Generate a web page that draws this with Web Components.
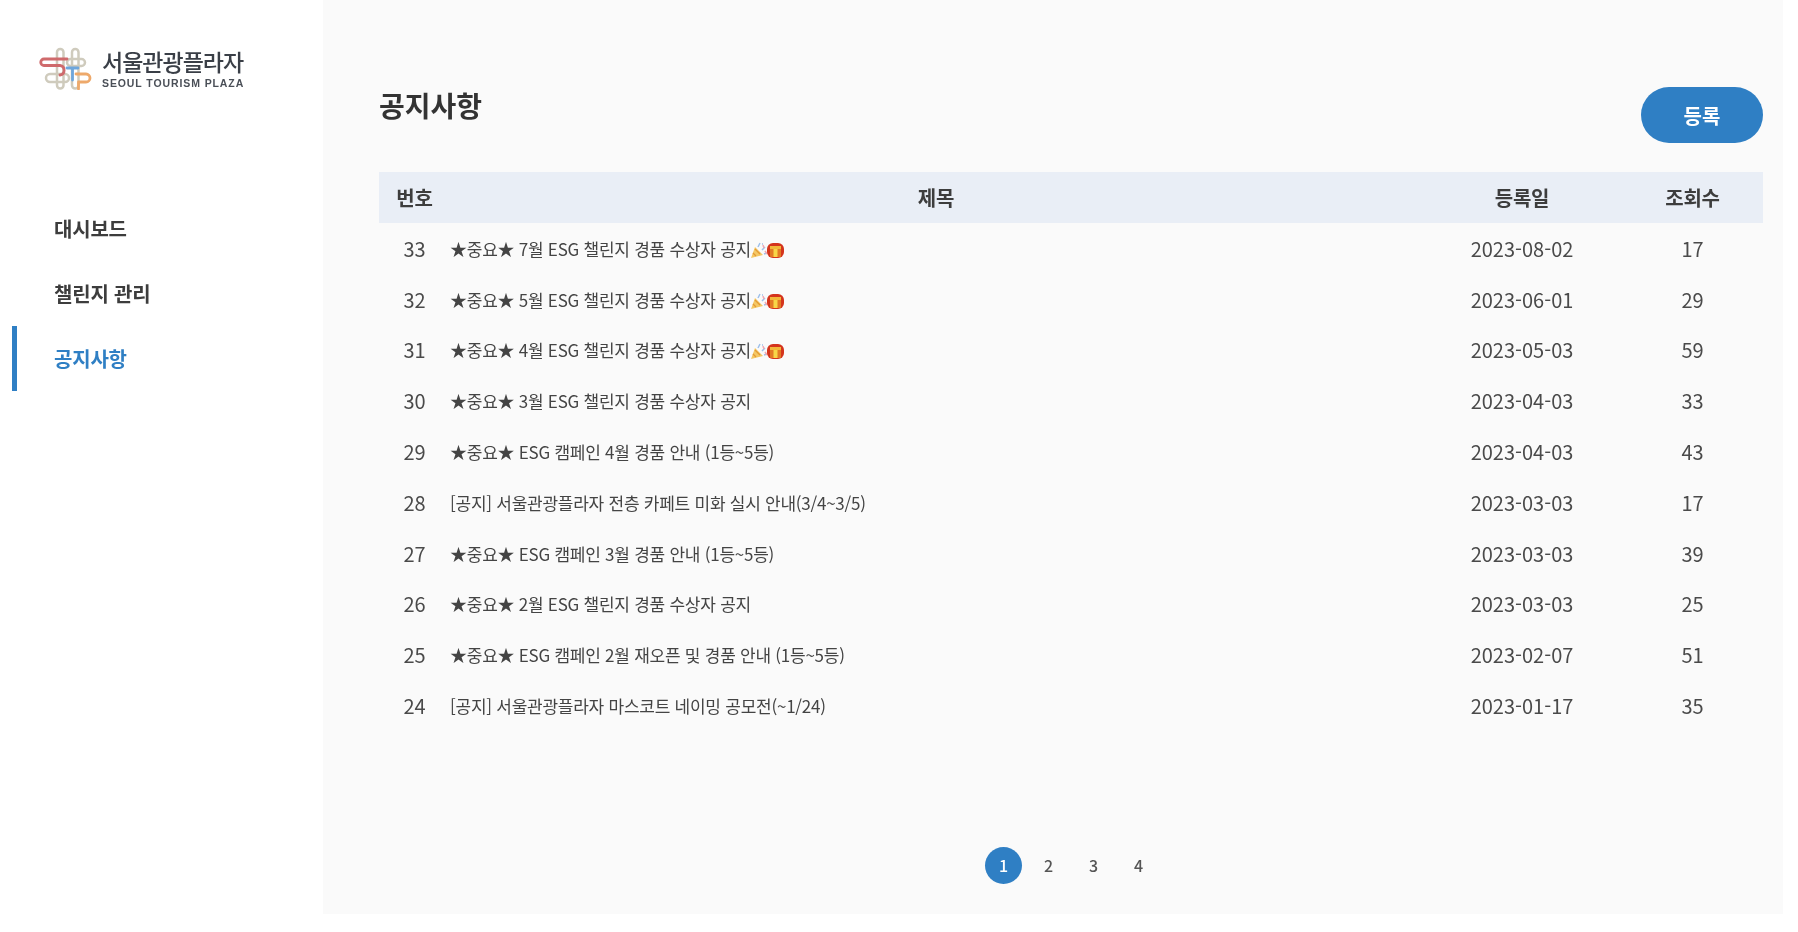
<!DOCTYPE html>
<html lang="ko">
<head>
<meta charset="utf-8">
<title>공지사항</title>
<style>
    html, body {
        margin: 0;
        background: #fff;
    }
    body {
        font-family: "Noto Sans CJK KR", "Noto Sans", sans-serif;
        color: #333;
    }
</style>
</head>
<body>
<admin-shell>
    <side-nav slot="side">
        <nav-item>대시보드</nav-item>
        <nav-item>챌린지 관리</nav-item>
        <nav-item active>공지사항</nav-item>
    </side-nav>
    <notice-board></notice-board>
</admin-shell>

<script>
const NOTICES = [
    [33, "★중요★ 7월 ESG 챌린지 경품 수상자 공지", "2023-08-02", 17, true],
    [32, "★중요★ 5월 ESG 챌린지 경품 수상자 공지", "2023-06-01", 29, true],
    [31, "★중요★ 4월 ESG 챌린지 경품 수상자 공지", "2023-05-03", 59, true],
    [30, "★중요★ 3월 ESG 챌린지 경품 수상자 공지", "2023-04-03", 33],
    [29, "★중요★ ESG 캠페인 4월 경품 안내 (1등~5등)", "2023-04-03", 43],
    [28, "[공지] 서울관광플라자 전층 카페트 미화 실시 안내(3/4~3/5)", "2023-03-03", 17],
    [27, "★중요★ ESG 캠페인 3월 경품 안내 (1등~5등)", "2023-03-03", 39],
    [26, "★중요★ 2월 ESG 챌린지 경품 수상자 공지", "2023-03-03", 25],
    [25, "★중요★ ESG 캠페인 2월 재오픈 및 경품 안내 (1등~5등)", "2023-02-07", 51],
    [24, "[공지] 서울관광플라자 마스코트 네이밍 공모전(~1/24)", "2023-01-17", 35],
];

class AdminShell extends HTMLElement {
    constructor () {
        super ();
        this.attachShadow ({mode: "open"});
        this.shadowRoot.innerHTML = `
<style>
    :host {
        display: block;
        height: 932px;
        overflow: hidden;
    }
    #main {
        display: flex;
        height: 914px;
        margin-right: 15px;
        filter: blur(0.6px);
    }
    #content {
        flex: 1;
        background: #fafafa;
        padding: 0 20px 0 56px;
    }
</style>
<div id="main">
    <slot name="side"></slot>
    <div id="content"><slot></slot></div>
</div>`;
    }
}

class SideNav extends HTMLElement {
    constructor () {
        super ();
        this.attachShadow ({mode: "open"});
        this.shadowRoot.innerHTML = `
<style>
    :host {
        display: block;
        width: 323px;
        flex: none;
        background: #fff;
    }
    #logo {
        display: flex;
        align-items: center;
        gap: 7px;
        height: 43px;
        padding: 47px 0 0 39px;
    }
    #words {
        display: flex;
        flex-direction: column;
        color: #3a3f47;
    }
    #ko {
        font-size: 23px;
        line-height: 27px;
        font-weight: 500;
        letter-spacing: -1px;
    }
    #en {
        font-family: "Liberation Sans", sans-serif;
        font-size: 10.500px;
        line-height: 13px;
        margin-top: 2px;
        font-weight: 700;
        letter-spacing: 0.900px;
        color: #4a4f57;
    }
    #items {
        display: flex;
        flex-direction: column;
        margin-top: 106px;
    }
</style>
<div id="logo">
    <svg width="56" height="43" viewBox="0 0 56 43" fill="none" stroke-width="2.500" stroke-linecap="round" stroke-linejoin="round">
        <g stroke="#cfcbbd">
            <rect x="18" y="2" width="6.500" height="39.500" rx="3.200"/>
            <rect x="33" y="2" width="6.500" height="39.500" rx="3.200"/>
            <rect x="28" y="12" width="18" height="7" rx="3.500"/>
            <rect x="7" y="27" width="23" height="8" rx="4"/>
        </g>
        <path d="M28 12H5a3.200 3.200 0 0 0 0 6.500h16a4.800 4.800 0 0 1 0 9.500" stroke="#cf6a6c" stroke-width="2.800"/>
        <path d="M28 21h11M33.500 21v12" stroke="#6ea6dc" stroke-width="2.800"/>
        <path d="M37 27h10a4 4 0 0 1 0 8H39.500v7" stroke="#eea96b" stroke-width="2.800"/>
    </svg>
    <div id="words">
        <span id="ko">서울관광플라자</span>
        <span id="en">SEOUL TOURISM PLAZA</span>
    </div>
</div>
<div id="items"><slot></slot></div>`;
    }
}

class NavItem extends HTMLElement {
    constructor () {
        super ();
        this.attachShadow ({mode: "open"});
        this.shadowRoot.innerHTML = `
<style>
    :host {
        display: flex;
        align-items: center;
        box-sizing: border-box;
        height: 65px;
        margin-left: 12px;
        padding-left: 37px;
        border-left: 5px solid transparent;
        font-size: 20px;
        font-weight: 700;
        letter-spacing: -0.200px;
        color: #3d3d3d;
    }
    :host([active]) {
        border-left-color: #2f7fc4;
        color: #2f7fc4;
    }
</style>
<slot></slot>`;
    }
}

class EmojiPair extends HTMLElement {
    constructor () {
        super ();
        this.attachShadow ({mode: "open"});
        this.shadowRoot.innerHTML = `
<style>
    :host {
        display: inline-flex;
        vertical-align: -3px;
        margin-left: -1px;
    }
</style>
<svg width="34" height="17" viewBox="0 0 34 17">
    <path d="M1 16 5 5l8 8z" fill="#f4c865"/>
    <path d="M3 11l3 3M5 7l5 5" stroke="#e39a35" stroke-width="1.300"/>
    <path d="M8 5l2-4M12 8l3-3M14 12l3-1M12 2h1" stroke="#9fc0ea" stroke-width="1.500"/>
    <path d="M13 3l1 3M15 9l2 3" stroke="#f0a8b2" stroke-width="1.500"/>
    <rect x="17" y="1" width="17" height="15" rx="6" fill="#d4341c"/>
    <rect x="20" y="5" width="11" height="10" rx="1" fill="#e37a25"/>
    <rect x="23.500" y="4" width="4" height="11" fill="#f8d648"/>
    <rect x="20" y="4" width="11" height="3" fill="#f2b83a"/>
</svg>`;
    }
}

class NoticeRow extends HTMLElement {
    constructor () {
        super ();
        this.attachShadow ({mode: "open"});
        this.shadowRoot.innerHTML = `
<style>
    :host {
        display: grid;
        grid-template-columns: 71px 1fr 200px 141px;
        align-items: center;
        height: 50.800px;
        font-size: 20px;
        color: #4a4a4a;
        text-align: center;
    }
    #title {
        font-size: 17px;
        text-align: left;
        letter-spacing: -0.250px;
        color: #444;
    }
</style>
<div id="no"></div>
<div id="title"></div>
<div id="date"></div>
<div id="hits"></div>`;
    }

    setData ([no, title, date, hits, emoji]) {
        const root = this.shadowRoot;
        root.querySelector ("#no").textContent = no;
        root.querySelector ("#title").textContent = title;
        root.querySelector ("#date").textContent = date;
        root.querySelector ("#hits").textContent = hits;
        if (emoji) {
            root.querySelector ("#title").appendChild (document.createElement ("emoji-pair"));
        }
    }
}

class PagerBar extends HTMLElement {
    constructor () {
        super ();
        this.attachShadow ({mode: "open"});
        this.shadowRoot.innerHTML = `
<style>
    :host {
        display: flex;
        justify-content: center;
        gap: 8px;
        font-size: 16px;
        font-weight: 500;
        color: #555;
    }
    div {
        width: 37px;
        height: 37px;
        line-height: 37px;
        border-radius: 50%;
        text-align: center;
    }
    .on {
        background: #2f7fc4;
        color: #fff;
    }
</style>
<div class="on">1</div><div>2</div><div>3</div><div>4</div>`;
    }
}

class NoticeBoard extends HTMLElement {
    constructor () {
        super ();
        this.attachShadow ({mode: "open"});
        this.shadowRoot.innerHTML = `
<style>
    :host {
        display: block;
    }
    #top {
        display: flex;
        justify-content: space-between;
        align-items: flex-start;
        height: 172px;
        box-sizing: border-box;
        padding-top: 87px;
    }
    h1 {
        margin: -1px 0 0;
        font-size: 28px;
        line-height: 38px;
        font-weight: 700;
        color: #333;
    }
    button {
        width: 122px;
        height: 56px;
        border: none;
        border-radius: 28px;
        background: #2f7fc4;
        color: #fff;
        font: 700 20px "Noto Sans CJK KR", sans-serif;
    }
    #head {
        display: grid;
        grid-template-columns: 71px 1fr 200px 141px;
        align-items: center;
        height: 51px;
        background: #e9eef6;
        font-size: 20px;
        font-weight: 700;
        letter-spacing: -0.200px;
        color: #3d3d3d;
        text-align: center;
    }
    pager-bar {
        margin-top: 116px;
    }
</style>
<div id="top">
    <h1>공지사항</h1>
    <button>등록</button>
</div>
<div id="head"><div>번호</div><div>제목</div><div>등록일</div><div>조회수</div></div>
<div id="rows"></div>
<pager-bar></pager-bar>`;
    }

    connectedCallback () {
        const rows = this.shadowRoot.querySelector ("#rows");
        NOTICES.forEach (notice => {
            const row = document.createElement ("notice-row");
            rows.appendChild (row);
            row.setData (notice);
        });
    }
}

customElements.define ("nav-item", NavItem);
customElements.define ("side-nav", SideNav);
customElements.define ("emoji-pair", EmojiPair);
customElements.define ("notice-row", NoticeRow);
customElements.define ("pager-bar", PagerBar);
customElements.define ("notice-board", NoticeBoard);
customElements.define ("admin-shell", AdminShell);
</script>
</body>
</html>
